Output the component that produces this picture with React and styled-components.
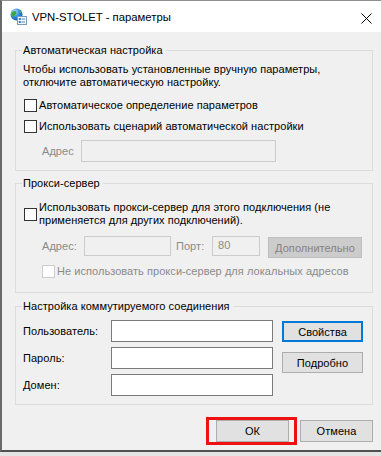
import React from 'react';
import styled, { createGlobalStyle } from 'styled-components';

const Global = createGlobalStyle`
  html, body { margin: 0; padding: 0; background: #e4e4e4; }
  body {
    font-family: "Liberation Sans", Arimo, sans-serif;
    font-size: 11px;
    letter-spacing: 0.05px;
    color: #000;
  }
  #root { width: 381px; height: 456px; overflow: hidden; }
  * { box-sizing: border-box; }
`;

const Window = styled.div`
  width: 381px;
  height: 452px;
  background: #f0f0f0;
  border-top: 1px solid #8e8e8e;
  border-left: 2px solid #6a6a6a;
  border-bottom: 2px solid #505050;
  display: flex;
  flex-direction: column;
`;

const TitleBar = styled.div`
  height: 31px;
  background: #fff;
  display: flex;
  align-items: center;
  padding: 0 9px 0 8px;
  flex-shrink: 0;
`;

const Title = styled.div`
  margin-left: 5px;
  font-size: 11.3px;
  letter-spacing: 0;
  line-height: 16px;
  margin-top: 1px;
  white-space: nowrap;
`;

const Close = styled.div`
  margin-left: auto;
  width: 11px;
  height: 11px;
  display: flex;
  margin-top: 3px;
`;

const Content = styled.div`
  padding: 11px 8px 0 13px;
  display: flex;
  flex-direction: column;
`;

const Group = styled.fieldset`
  margin: ${p => p.$top || 0}px 0 0 0;
  padding: ${p => p.$pt || 0}px 7px ${p => p.$pb || 8}px 7px;
  border: 1px solid #dcdcdc;
  width: 358px;
  min-width: 0;
`;

const Legend = styled.legend`
  padding: 0 3px 0 1px;
  margin-left: -1px;
  line-height: 14px;
  font-size: 11px;
  white-space: nowrap;
`;

const Text = styled.div`
  line-height: 13px;
  white-space: nowrap;
  margin-top: ${p => p.$top || 0}px;
  color: ${p => (p.$disabled ? '#8a8a8a' : '#000')};
`;

const CheckRow = styled.div`
  display: flex;
  align-items: center;
  gap: 2px;
  margin-top: ${p => p.$top || 0}px;
  padding-left: ${p => p.$indent || 1}px;
`;

const Box = styled.span`
  width: 13px;
  height: 13px;
  flex-shrink: 0;
  background: #fff;
  border: 1px solid ${p => (p.$disabled ? '#cccccc' : '#333333')};
`;

const Row = styled.div`
  display: flex;
  align-items: flex-start;
  margin-top: ${p => p.$top || 0}px;
  padding-left: ${p => p.$indent || 0}px;
`;

const Label = styled.span`
  width: ${p => p.$w}px;
  margin-left: ${p => p.$ml || 0}px;
  flex-shrink: 0;
  white-space: nowrap;
  line-height: ${p => p.$h || 20}px;
  color: ${p => (p.$disabled ? '#8a8a8a' : '#000')};
`;

const Input = styled.div`
  width: ${p => p.$w}px;
  height: ${p => p.$h || 22}px;
  flex-shrink: 0;
  background: ${p => (p.$disabled ? '#f0f0f0' : '#fff')};
  border: 1px solid ${p => (p.$disabled ? '#cccccc' : '#7a7a7a')};
  color: #8a8a8a;
  line-height: ${p => (p.$h || 22) - 3}px;
  padding-left: 5px;
`;

const Button = styled.div`
  width: ${p => p.$w || 73}px;
  height: ${p => p.$h || 22}px;
  flex-shrink: 0;
  margin-top: ${p => p.$top || 0}px;
  margin-left: ${p => p.$ml || 0}px;
  display: flex;
  align-items: center;
  justify-content: center;
  white-space: nowrap;
  background: ${p => (p.$disabled ? '#cccccc' : '#e1e1e1')};
  color: ${p => (p.$disabled ? '#838383' : '#000')};
  border: ${p => (p.$focus ? '2px solid #0078d7' : p.$disabled ? '1px solid #bfbfbf' : '1px solid #adadad')};
  line-height: 14px;
`;

const DialGrid = styled.div`
  display: flex;
  align-items: flex-start;
`;

const Fields = styled.div`
  display: grid;
  grid-template-columns: 88px 162px;
  grid-auto-rows: 22px;
  row-gap: 5px;
  align-items: center;
`;

const Side = styled.div`
  display: flex;
  flex-direction: column;
  margin-left: 9px;
`;

const Footer = styled.div`
  display: flex;
  justify-content: flex-end;
  gap: 11px;
  margin-top: 15px;
`;

const Marked = styled.div`
  position: relative;
  &::after {
    content: '';
    position: absolute;
    top: -3px;
    bottom: -3px;
    left: -10px;
    right: -8px;
    border: 3px solid #ee1111;
    pointer-events: none;
  }
`;

function AppIcon() {
  return (
    <svg width="17" height="17" viewBox="0 0 17 17">
      <defs>
        <radialGradient id="g" cx="0.35" cy="0.3" r="0.8">
          <stop offset="0" stopColor="#bfe6ff" />
          <stop offset="0.5" stopColor="#2f8fe0" />
          <stop offset="1" stopColor="#10529c" />
        </radialGradient>
      </defs>
      <circle cx="6.5" cy="6.5" r="6" fill="url(#g)" />
      <path d="M3 3.5 C4.5 2.5 6 3 6.5 4.5 C7 6 5 6.5 4.5 8 C4 9.5 2.5 9 2 7.5 C1.6 6 2 4.5 3 3.5Z" fill="#3fa63a" />
      <path d="M8.5 2 C10 2.3 11.5 3.5 11.5 5 C10 5 9 4 8.5 2Z" fill="#4cb548" />
      <rect x="7.5" y="8.5" width="9" height="8" fill="#f3f7fb" stroke="#7d9bb8" strokeWidth="1" />
      <rect x="8.8" y="10" width="2" height="2" fill="#2a7bd4" />
      <rect x="8.8" y="13" width="2" height="2" fill="#2a7bd4" />
      <line x1="11.5" y1="11" x2="15" y2="11" stroke="#5d86b3" strokeWidth="1" />
      <line x1="11.5" y1="14" x2="15" y2="14" stroke="#5d86b3" strokeWidth="1" />
    </svg>
  );
}

function CloseIcon() {
  return (
    <svg width="11" height="11" viewBox="0 0 11 11">
      <path d="M0.5 0.5 L10.5 10.5 M10.5 0.5 L0.5 10.5" stroke="#000" strokeWidth="1" fill="none" />
    </svg>
  );
}

export default function App() {
  return (
    <>
      <Global />
      <Window>
        <TitleBar>
          <AppIcon />
          <Title>VPN-STOLET - параметры</Title>
          <Close><CloseIcon /></Close>
        </TitleBar>
        <Content>
          <Group $pt={6} $pb={8}>
            <Legend>Автоматическая настройка</Legend>
            <Text>
              Чтобы использовать установленные вручную параметры,
              <br />
              отключите автоматическую настройку.
            </Text>
            <CheckRow $top={10}>
              <Box />
              <Text>Автоматическое определение параметров</Text>
            </CheckRow>
            <CheckRow $top={8}>
              <Box />
              <Text>Использовать сценарий автоматической настройки</Text>
            </CheckRow>
            <Row $top={7} $indent={19}>
              <Label $w={39} $h={22} $disabled>Адрес</Label>
              <Input $w={195} $disabled />
            </Row>
          </Group>

          <Group $top={5} $pt={11} $pb={14}>
            <Legend>Прокси-сервер</Legend>
            <CheckRow>
              <Box />
              <Text>
                Использовать прокси-сервер для этого подключения (не
                <br />
                применяется для других подключений).
              </Text>
            </CheckRow>
            <Row $top={9} $indent={19}>
              <Label $w={42} $disabled>Адрес:</Label>
              <Input $w={87} $h={20} $disabled />
              <Label $w={36} $ml={5} $disabled>Порт:</Label>
              <Input $w={48} $h={20} $disabled>80</Input>
              <Button $w={94} $h={21} $top={1} $ml={8} $disabled>Дополнительно</Button>
            </Row>
            <CheckRow $top={7} $indent={19}>
              <Box $disabled />
              <Text $disabled>Не использовать прокси-сервер для локальных адресов</Text>
            </CheckRow>
          </Group>

          <Group $top={6} $pt={7} $pb={8}>
            <Legend>Настройка коммутируемого соединения</Legend>
            <DialGrid>
              <Fields>
                <Label>Пользователь:</Label>
                <Input $w={162} />
                <Label>Пароль:</Label>
                <Input $w={162} />
                <Label>Домен:</Label>
                <Input $w={162} />
              </Fields>
              <Side>
                <Button $w={81} $h={21} $top={1} $focus>Свойства</Button>
                <Button $w={81} $h={21} $top={10}>Подробно</Button>
              </Side>
            </DialGrid>
          </Group>

          <Footer>
            <Marked>
              <Button>ОК</Button>
            </Marked>
            <Button>Отмена</Button>
          </Footer>
        </Content>
      </Window>
    </>
  );
}
